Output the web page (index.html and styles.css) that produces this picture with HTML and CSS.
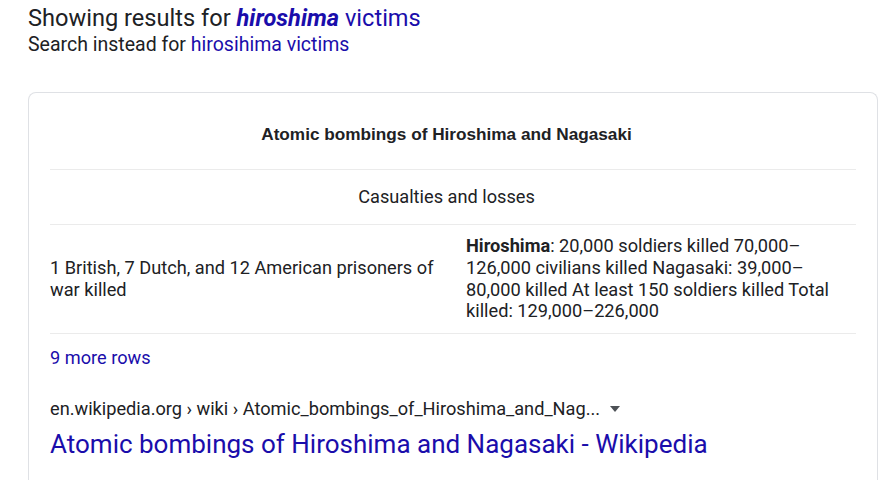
FILE: index.html
```html
<!DOCTYPE html>
<html>
<head>
<meta charset="utf-8">
<link rel="stylesheet" href="styles.css">
</head>
<body>
<div class="page">
  <div class="spell">
    <p class="showing">Showing results for <a class="link" href="#"><b><i>hiroshima</i></b> victims</a></p>
    <p class="instead">Search instead for <a class="link" href="#">hirosihima victims</a></p>
  </div>
  <div class="card">
    <div class="table-title">Atomic bombings of Hiroshima and Nagasaki</div>
    <div class="table-sub">Casualties and losses</div>
    <div class="table-row">
      <div class="cell cell-left">1 British, 7 Dutch, and 12 American prisoners of war killed</div>
      <div class="cell cell-right"><b>Hiroshima</b>: 20,000 soldiers killed 70,000–126,000 civilians killed Nagasaki: 39,000–80,000 killed At least 150 soldiers killed Total killed: 129,000–226,000</div>
    </div>
    <div class="more"><a class="link" href="#">9 more rows</a></div>
    <div class="result">
      <div class="cite">en.wikipedia.org › wiki › Atomic_bombings_of_Hiroshima_and_Nag... <span class="caret"></span></div>
      <a class="result-title link" href="#">Atomic bombings of Hiroshima and Nagasaki - Wikipedia</a>
    </div>
  </div>
</div>
</body>
</html>
```
FILE: styles.css
```css
html, body {
  margin: 0;
  padding: 0;
  background: #fff;
}
body {
  font-family: Roboto, "Liberation Sans", Arial, sans-serif;
  color: #202124;
}
.page {
  padding: 5px 17px 0 28px;
}
.link {
  color: #1a0dab;
  text-decoration: none;
}
.spell p {
  margin: 0;
}
.showing {
  font-size: 23.6px;
  line-height: 26px;
}
.instead {
  font-size: 19.5px;
  line-height: 28px;
}
.card {
  margin-top: 33px;
  border: 1px solid #dfe1e5;
  border-bottom: none;
  border-radius: 8px 8px 0 0;
  padding: 0 21px;
  height: 400px;
}
.table-title {
  font-family: "Liberation Sans", Arial, sans-serif;
  font-weight: bold;
  font-size: 17.2px;
  line-height: 24px;
  text-align: center;
  padding: 29px 13px 23px 0;
  border-bottom: 1px solid #ebebeb;
}
.table-sub {
  font-size: 18.2px;
  line-height: 22px;
  text-align: center;
  padding: 16px 13px 16px 0;
  border-bottom: 1px solid #ebebeb;
}
.table-row {
  display: grid;
  grid-template-columns: 1fr 1fr;
  align-items: center;
  font-size: 18.2px;
  line-height: 21.75px;
  padding: 10px 0 11px;
  border-bottom: 1px solid #ebebeb;
}
.cell-left {
  padding-right: 8px;
}
.cell-right {
  padding: 0 15px 0 13px;
}
.more {
  font-size: 18.2px;
  line-height: 22px;
  padding: 13px 0 0;
}
.result {
  margin-top: 29px;
}
.cite {
  font-size: 18.2px;
  line-height: 22px;
  color: #202124;
  display: flex;
  align-items: center;
  gap: 10px;
}
.caret {
  width: 0;
  height: 0;
  border-left: 5px solid transparent;
  border-right: 5px solid transparent;
  border-top: 6px solid #4d5156;
}
.result-title {
  display: block;
  font-size: 26px;
  line-height: 32px;
  margin-top: 8px;
}
```
